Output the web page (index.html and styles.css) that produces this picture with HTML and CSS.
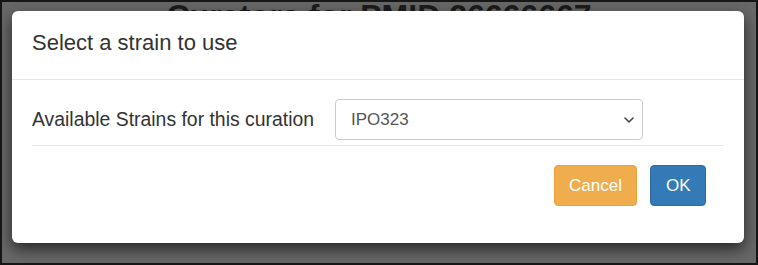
FILE: index.html
```html
<!DOCTYPE html>
<html lang="en">
<head>
<meta charset="utf-8">
<title>Select a strain</title>
<link rel="stylesheet" href="styles.css">
</head>
<body>
<div class="screen">
  <h1 class="page-title">Curators for PMID 26666667</h1>
  <div class="modal">
    <div class="modal-header">
      <h4 class="modal-title">Select a strain to use</h4>
    </div>
    <div class="modal-body">
      <div class="form-row">
        <label class="form-label">Available Strains for this curation</label>
        <div class="select">
          <span class="select-value">IPO323</span>
          <svg class="chevron" width="10" height="6" viewBox="0 0 10 6" aria-hidden="true"><path d="M1 1 L5 5 L9 1" fill="none" stroke="#444" stroke-width="1.6" stroke-linecap="round" stroke-linejoin="round"/></svg>
        </div>
      </div>
      <div class="divider"></div>
      <div class="actions">
        <button class="btn btn-warning" type="button">Cancel</button>
        <button class="btn btn-primary" type="button">OK</button>
      </div>
    </div>
  </div>
</div>
</body>
</html>
```
FILE: styles.css
```css
* { box-sizing: border-box; }

html, body {
  margin: 0;
  padding: 0;
}

body {
  font-family: "Liberation Sans", Arial, sans-serif;
  color: #333;
}

.screen {
  position: relative;
  width: 758px;
  height: 265px;
  border: 2px solid #161616;
  background: #686868;
  overflow: hidden;
}

.page-title {
  margin: -4px 0 0;
  font-size: 32px;
  line-height: 36px;
  font-weight: bold;
  text-align: center;
  color: #1c1c1c;
}

.modal {
  position: absolute;
  left: 10px;
  top: 9px;
  width: 732px;
  height: 232px;
  background: #fff;
  border-radius: 6px;
  box-shadow: 0 6px 15px rgba(0, 0, 0, 0.65);
}

.modal-header {
  height: 69px;
  padding: 19px 20px 0;
  border-bottom: 1px solid #e5e5e5;
}

.modal-title {
  margin: 0;
  font-size: 22px;
  line-height: 26px;
  font-weight: normal;
  color: #333;
}

.modal-body {
  padding: 19px 20px 0;
}

.form-row {
  display: flex;
  align-items: center;
}

.form-label {
  flex: 0 0 303px;
  font-size: 19.4px;
  line-height: 22px;
  color: #333;
  margin-top: -2px;
}

.select {
  width: 308px;
  height: 41px;
  border: 1px solid #ccc;
  border-radius: 4px;
  padding: 0 8px 0 15px;
  display: flex;
  align-items: center;
  justify-content: space-between;
  font-size: 17px;
  color: #555;
}

.chevron {
  display: block;
  margin-top: 1px;
}

.divider {
  margin-top: 5px;
  height: 1px;
  background: #e8e8e8;
}

.actions {
  display: flex;
  justify-content: flex-end;
  gap: 13px;
  padding: 19px 18px 0 0;
}

.btn {
  height: 41px;
  padding: 0 14.5px;
  border: 1px solid transparent;
  border-radius: 4px;
  font-family: "Liberation Sans", Arial, sans-serif;
  font-size: 17px;
  color: #fff;
  cursor: pointer;
}

.btn-warning {
  background: #f0ad4e;
  border-color: #eea236;
}

.btn-primary {
  background: #337ab7;
  border-color: #2e6da4;
}
```
